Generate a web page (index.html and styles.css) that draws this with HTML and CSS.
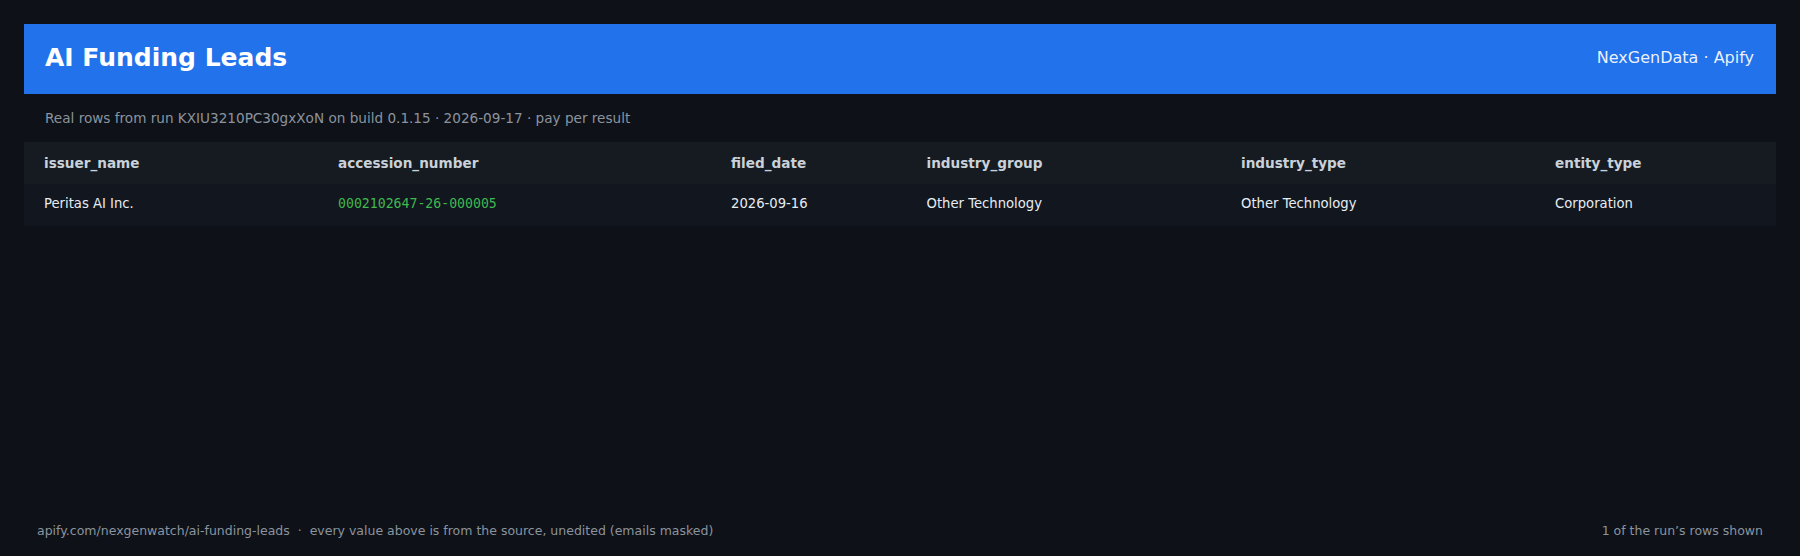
FILE: index.html
```html
<!DOCTYPE html>
<html lang="en">
<head>
<meta charset="utf-8">
<title>AI Funding Leads</title>
<link rel="stylesheet" href="styles.css">
</head>
<body>
<div class="page">
  <header class="banner">
    <h1 class="title">AI Funding Leads</h1>
    <div class="brand">NexGenData · Apify</div>
  </header>
  <p class="subtitle">Real rows from run KXIU3210PC30gxXoN on build 0.1.15 · 2026-09-17 · pay per result</p>
  <table class="data">
    <colgroup>
      <col class="c1"><col class="c2"><col class="c3"><col class="c4"><col class="c5"><col class="c6">
    </colgroup>
    <thead>
      <tr>
        <th>issuer_name</th>
        <th>accession_number</th>
        <th>filed_date</th>
        <th>industry_group</th>
        <th>industry_type</th>
        <th>entity_type</th>
      </tr>
    </thead>
    <tbody>
      <tr>
        <td>Peritas AI Inc.</td>
        <td class="mono">0002102647-26-000005</td>
        <td>2026-09-16</td>
        <td>Other Technology</td>
        <td>Other Technology</td>
        <td>Corporation</td>
      </tr>
    </tbody>
  </table>
  <footer class="foot">
    <span>apify.com/nexgenwatch/ai-funding-leads &nbsp;·&nbsp; every value above is from the source, unedited (emails masked)</span>
    <span>1 of the run’s rows shown</span>
  </footer>
</div>
</body>
</html>
```
FILE: styles.css
```css
html, body {
  margin: 0;
  padding: 0;
  background: #0e1118;
}
body {
  font-family: "DejaVu Sans", sans-serif;
  color: #e6edf3;
}
.page {
  box-sizing: border-box;
  height: 556px;
  padding: 24px 24px 18px;
  display: flex;
  flex-direction: column;
}
.banner {
  height: 70px;
  box-sizing: border-box;
  background: #2172eb;
  padding: 0 22px 3px 21px;
  display: flex;
  align-items: center;
  justify-content: space-between;
}
.title {
  margin: 0;
  font-size: 25px;
  font-weight: bold;
  color: #ffffff;
  line-height: 30px;
}
.brand {
  font-size: 16px;
  color: rgba(255, 255, 255, 0.92);
  line-height: 20px;
}
.subtitle {
  margin: 0;
  padding: 16px 21px 16px;
  font-size: 13.6px;
  line-height: 16px;
  color: #8b949e;
}
.data {
  width: 100%;
  border-collapse: collapse;
  table-layout: fixed;
  font-size: 13.2px;
}
.c1 { width: 294px; }
.c2 { width: 393px; }
.c3 { width: 195.5px; }
.c4 { width: 314.5px; }
.c5 { width: 314px; }
.c6 { width: 241px; }
.data tr {
  height: 42px;
}
.data th {
  background: #161b22;
  color: #c9d1d9;
  font-size: 13.6px;
  font-weight: bold;
  text-align: left;
  padding: 0 20px;
  vertical-align: middle;
}
.data td {
  background: #12161e;
  color: #e6edf3;
  padding: 12px 20px 0;
  line-height: 16px;
  vertical-align: top;
}
.data .mono {
  font-family: "DejaVu Sans Mono", monospace;
  color: #3fb950;
}
.foot {
  margin-top: auto;
  display: flex;
  justify-content: space-between;
  padding: 0 13px;
  font-size: 12.5px;
  color: #8b949e;
}
```
